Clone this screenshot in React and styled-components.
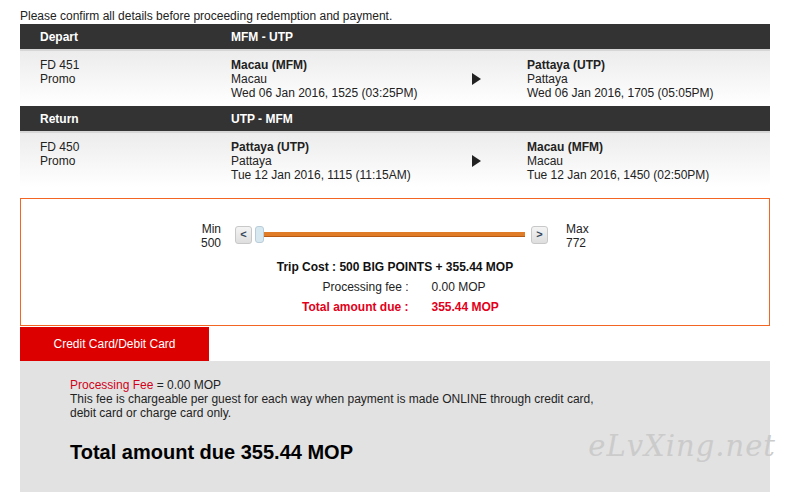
import React from 'react';
import styled, { createGlobalStyle } from 'styled-components';

const Global = createGlobalStyle`
  body {
    margin: 0;
    background: #fff;
    font-family: "Liberation Sans", Arial, sans-serif;
    font-size: 12px;
    color: #222;
  }
`;

const Page = styled.div`
  width: 750px;
  padding: 8px 0 0 20px;
`;

const Notice = styled.div`
  line-height: 16px;
`;

const HeadBar = styled.div`
  display: grid;
  grid-template-columns: 191px 1fr;
  height: 25px;
  align-items: center;
  padding-left: 20px;
  background: #333;
  color: #fff;
  font-weight: bold;
  margin-top: ${p => p.$gap || 0}px;
`;

const FlightRow = styled.div`
  display: grid;
  grid-template-columns: 191px 241px 55px 1fr;
  align-items: center;
  padding: 7px 0 5px 20px;
  border-top: 2px solid #d6d6d6;
  background: linear-gradient(#ececec, #fff);
  line-height: 14px;
`;

const Cell = styled.div`
  align-self: start;
`;

const City = styled.div`
  font-weight: bold;
`;

const Arrow = styled.div`
  width: 0;
  height: 0;
  border-top: 6px solid transparent;
  border-bottom: 6px solid transparent;
  border-left: 9px solid #222;
`;

const CostBox = styled.div`
  margin-top: 11px;
  border: 1px solid #f26522;
  padding: 23px 0 8px;
`;

const SliderRow = styled.div`
  display: flex;
  justify-content: center;
  align-items: center;
  line-height: 14px;
`;

const Limit = styled.div`
  text-align: ${p => p.$align};
  width: 24px;
  margin: ${p => (p.$align === 'right' ? '0 14px 0 -3px' : '0 0 0 18px')};
`;

const StepButton = styled.div`
  width: 15px;
  height: 16px;
  border: 1px solid #c8c8c8;
  border-radius: 3px;
  background: linear-gradient(#f4f4f4, #dedede);
  color: #33475b;
  font-weight: bold;
  font-size: 11px;
  line-height: 15px;
  text-align: center;
  margin-top: -3px;
`;

const Track = styled.div`
  position: relative;
  width: 276px;
  height: 17px;
  margin: -3px 0 0 3px;
  display: flex;
  align-items: center;
  padding-left: 4px;
  box-sizing: border-box;
`;

const Bar = styled.div`
  flex: 1;
  height: 4px;
  margin-right: 6px;
  background: #e07b27;
  border-bottom: 1px solid #b65a14;
`;

const Thumb = styled.div`
  position: absolute;
  left: 0;
  top: 0;
  width: 7px;
  height: 15px;
  border: 1px solid #b9cdd8;
  border-radius: 3px;
  background: #d8e8f0;
`;

const Summary = styled.div`
  margin-top: 7px;
  line-height: 20px;
  text-align: center;
`;

const TripCost = styled.div`
  font-weight: bold;
  color: #111;
`;

const FeeLine = styled.div`
  display: flex;
  justify-content: center;
  gap: 23px;
  color: ${p => (p.$red ? '#e2001a' : '#222')};
  font-weight: ${p => (p.$red ? 'bold' : 'normal')};
`;

const FeeLabel = styled.span`
  width: 142px;
  text-align: right;
`;

const FeeValue = styled.span`
  width: 92px;
  text-align: left;
`;

const Tab = styled.div`
  position: relative;
  margin-top: 1px;
  width: 189px;
  height: 34px;
  line-height: 34px;
  text-align: center;
  background: #dc0000;
  color: #fff;
  font-size: 12px;

  &::after {
    content: '';
    position: absolute;
    left: 89px;
    bottom: -5px;
    border-left: 5px solid transparent;
    border-right: 5px solid transparent;
    border-top: 5px solid #dc0000;
  }
`;

const Panel = styled.div`
  position: relative;
  background: #e2e2e2;
  padding: 17px 0 40px 50px;
  height: 131px;
  box-sizing: border-box;
  line-height: 14px;
`;

const PanelText = styled.div`
  width: 540px;
  color: #222;
`;

const Red = styled.span`
  color: #d0021b;
`;

const Total = styled.div`
  margin-top: 20px;
  font-size: 20px;
  line-height: 24px;
  font-weight: bold;
  color: #000;
`;

const Watermark = styled.div`
  position: absolute;
  right: -6px;
  top: 78px;
  font-family: "DejaVu Serif", serif;
  font-style: italic;
  font-size: 29px;
  letter-spacing: 1px;
  color: #cbcbcb;
`;

const legs = [
  {
    label: 'Depart',
    route: 'MFM - UTP',
    flight: 'FD 451',
    from: ['Macau (MFM)', 'Macau', 'Wed 06 Jan 2016, 1525 (03:25PM)'],
    to: ['Pattaya (UTP)', 'Pattaya', 'Wed 06 Jan 2016, 1705 (05:05PM)'],
  },
  {
    label: 'Return',
    route: 'UTP - MFM',
    flight: 'FD 450',
    from: ['Pattaya (UTP)', 'Pattaya', 'Tue 12 Jan 2016, 1115 (11:15AM)'],
    to: ['Macau (MFM)', 'Macau', 'Tue 12 Jan 2016, 1450 (02:50PM)'],
  },
];

const Stop = ({ lines }) => (
  <Cell>
    <City>{lines[0]}</City>
    <div>{lines[1]}</div>
    <div>{lines[2]}</div>
  </Cell>
);

export default function App() {
  return (
    <Page>
      <Global />
      <Notice>Please confirm all details before proceeding redemption and payment.</Notice>

      {legs.map((leg, i) => (
        <React.Fragment key={leg.label}>
          <HeadBar $gap={i ? 1 : 0}>
            <span>{leg.label}</span>
            <span>{leg.route}</span>
          </HeadBar>
          <FlightRow>
            <Cell>
              <div>{leg.flight}</div>
              <div>Promo</div>
            </Cell>
            <Stop lines={leg.from} />
            <Arrow />
            <Stop lines={leg.to} />
          </FlightRow>
        </React.Fragment>
      ))}

      <CostBox>
        <SliderRow>
          <Limit $align="right">Min<br />500</Limit>
          <StepButton>&lt;</StepButton>
          <Track>
            <Bar />
            <Thumb />
          </Track>
          <StepButton>&gt;</StepButton>
          <Limit $align="left">Max<br />772</Limit>
        </SliderRow>
        <Summary>
          <TripCost>Trip Cost : 500 BIG POINTS + 355.44 MOP</TripCost>
          <FeeLine>
            <FeeLabel>Processing fee :</FeeLabel>
            <FeeValue>0.00 MOP</FeeValue>
          </FeeLine>
          <FeeLine $red>
            <FeeLabel>Total amount due :</FeeLabel>
            <FeeValue>355.44 MOP</FeeValue>
          </FeeLine>
        </Summary>
      </CostBox>

      <Tab>Credit Card/Debit Card</Tab>
      <Panel>
        <PanelText>
          <div><Red>Processing Fee</Red> = 0.00 MOP</div>
          <div>
            This fee is chargeable per guest for each way when payment is made ONLINE through credit card,
            debit card or charge card only.
          </div>
        </PanelText>
        <Total>Total amount due 355.44 MOP</Total>
        <Watermark>eLvXing.net</Watermark>
      </Panel>
    </Page>
  );
}
